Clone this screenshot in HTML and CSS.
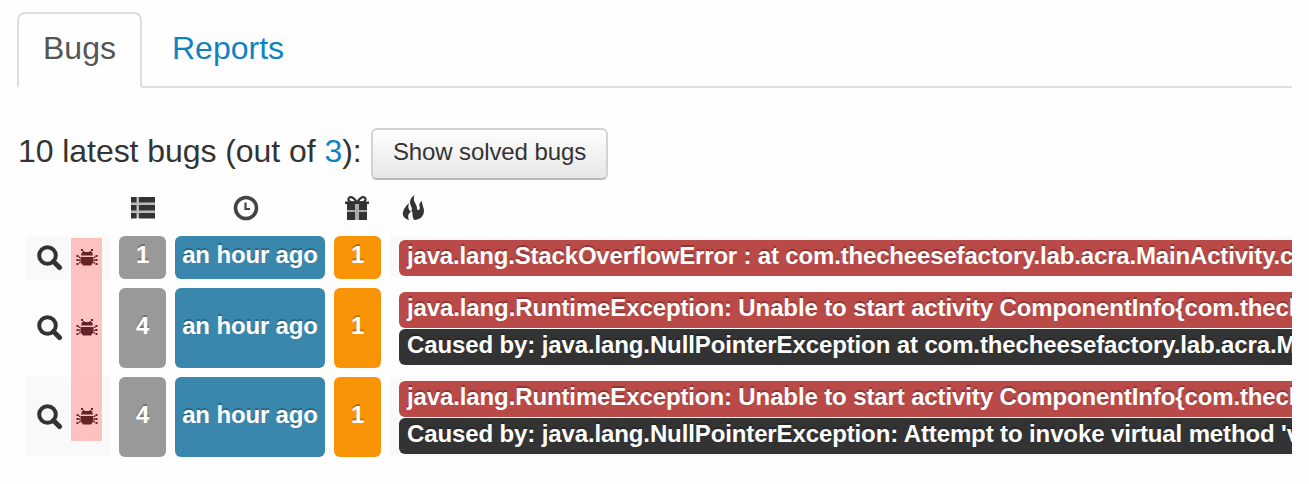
FILE: index.html
```
<!DOCTYPE html>
<html lang="en">
<head>
<meta charset="utf-8">
<title>Bugs</title>
<link rel="stylesheet" href="styles.css">
</head>
<body>
<svg class="defs" width="0" height="0" aria-hidden="true">
  <symbol id="search" viewBox="0 0 26 26"><circle cx="10.5" cy="10.5" r="8.300" fill="none" stroke="#333" stroke-width="4"/><path d="M16.500 16.500L22.500 22.500" stroke="#333" stroke-width="5" stroke-linecap="round"/></symbol>
  <symbol id="bug" viewBox="0 0 22 18"><path fill="#652328" d="M5 0h2v2h1.500v1h5V2H15V0h2v2h-2v1h1l1 3.500H5L6 3h1V2H5zM4.500 8h13v5L15 16.500H7L4.500 13zM.5 6h2v2h-2zM19.500 6h2v2h-2zM.5 10h2v2h-2zM2.700 7.500h1.400V9H2.700zM18 7.500h1.400V9H18zM19.500 10h2v2h-2zM2.700 10.500h1.400V12H2.700zM18 10.500h1.400V12H18zM.5 14h2v2h-2zM19.500 14h2v2h-2zM3 13h1.500v1.500H3zM17.500 13H19v1.500h-1.500z"/></symbol>
</svg>
<nav class="tabs">
  <a class="tab active">Bugs</a>
  <a class="tab">Reports</a>
</nav>
<main>
  <div class="heading"><span class="summary">10 latest bugs (out of <a>3</a>):</span><button class="button">Show solved bugs</button></div>
  <div class="grid head">
    <span></span>
    <svg width="26" height="24" viewBox="0 0 26 24"><path fill="#bbb" d="M1 1h24v21H1z"/><path fill="#333" d="M1 1h5.500v5.500H1zM9 1h16v5.500H9zM1 9h5.500v5.500H1zM9 9h16v5.500H9zM1 17h5.500v5.500H1zM9 17h16v5.500H9z"/></svg>
    <svg class="clock" width="26" height="26" viewBox="0 0 26 26"><circle cx="13" cy="13" r="10.500" fill="none" stroke="#444" stroke-width="3.600"/><path d="M12.500 7.500V14H17" fill="none" stroke="#444" stroke-width="2.200"/></svg>
    <svg class="gift" width="26" height="26" viewBox="0 0 26 26"><path fill="#aaa" d="M3 9h20v16H3z"/><path fill="#333" d="M3 9h8v6H3zM15 9h8v6h-8zM3 17h8v8H3zM15 17h8v8h-8zM1 6.500h24V9H1z"/><path d="M12.500 7C9 1 5 1 4.500 4s4 4 8 3M13.500 7c3.500-6 7.500-6 8-3s-4 4-8 3" fill="none" stroke="#333" stroke-width="2.200"/></svg>
    <svg class="fire" width="24" height="26" viewBox="0 0 24 26"><path fill="#333" d="M12.500 0C8 3 7 7 9 11c2 4 0 6-1 5-2-2-2-5-1-8-3 3-5 5-6 9-1 4 2 7 6 8-2-5 0-7 3-9 1 3 0 6 2 9 6 0 10-4 10-9 0-4-2-5-2-10-3 2-3 4-2 7-1 3-3 3-3 0 0-4-5-7-2.500-13z"/></svg>
  </div>
  <section class="rows">
    <div class="highlight"></div>
    <div class="grid row shaded">
      <div class="actions"><svg class="search"><use href="#search"/></svg><svg class="bug"><use href="#bug"/></svg></div>
      <div class="badge gray">1</div><div class="badge blue">an hour ago</div><div class="badge orange">1</div>
      <div class="trace"><p class="line red first">java.lang.StackOverflowError : at com.thecheesefactory.lab.acra.MainActivity.c</p></div>
    </div>
    <div class="grid row tall">
      <div class="actions"><svg class="search"><use href="#search"/></svg><svg class="bug"><use href="#bug"/></svg></div>
      <div class="badge gray">4</div><div class="badge blue">an hour ago</div><div class="badge orange">1</div>
      <div class="trace"><p class="line red">java.lang.RuntimeException: Unable to start activity ComponentInfo{com.thech</p><p class="line dark">Caused by: java.lang.NullPointerException at com.thecheesefactory.lab.acra.M</p></div>
    </div>
    <div class="grid row tall shaded">
      <div class="actions"><svg class="search"><use href="#search"/></svg><svg class="bug"><use href="#bug"/></svg></div>
      <div class="badge gray">4</div><div class="badge blue">an hour ago</div><div class="badge orange">1</div>
      <div class="trace"><p class="line red">java.lang.RuntimeException: Unable to start activity ComponentInfo{com.thech</p><p class="line dark">Caused by: java.lang.NullPointerException: Attempt to invoke virtual method 'v</p></div>
    </div>
  </section>
</main>
</body>
</html>
```
FILE: styles.css
```
* { box-sizing: border-box; }
body { margin: 0; padding: 12px 17px 0; background: #fefefe; color: #333; font-family: "Liberation Sans", Arial, sans-serif; overflow: hidden; }
.defs { display: block; height: 0; }
.tabs { display: flex; height: 76px; border-bottom: 2px solid #ddd; }
.tab { height: 76px; padding: 0 24px; border: 2px solid transparent; font-size: 32px; line-height: 68px; color: #0e83c2; }
.tab + .tab { padding-left: 28px; }
.active { width: 125px; color: #555; background: #fefefe; border-color: #ddd; border-bottom-color: #fefefe; border-radius: 8px 8px 0 0; }
.heading { display: flex; align-items: center; height: 52px; margin-top: 40px; }
.summary { width: 354px; padding-left: 1px; font-size: 32px; line-height: 46px; padding-bottom: 7px; letter-spacing: -0.06px; white-space: nowrap; }
.summary a { color: #0e83c2; }
.button { width: 237px; height: 52px; padding: 0 0 4px; border: 2px solid #d2d2d2; border-bottom-color: #b8b8b8; border-radius: 6px; background: linear-gradient(#fefefe, #e7e7e7); color: #333; font: 24px "Liberation Sans", Arial, sans-serif; letter-spacing: -0.1px; }
.grid { display: grid; grid-template-columns: 84px 47px 150px 47px 902px; column-gap: 9px; padding-left: 9px; }
.head { height: 56px; align-items: center; justify-items: center; }
.head .clock { margin-right: 8px; }
.head .gift { margin-right: 2px; }
.head .fire { justify-self: start; margin-left: 12px; }
.rows { position: relative; width: 1275px; overflow: hidden; }
.row { height: 43px; margin-bottom: 9px; }
.tall { height: 80px; }
.row:last-child { margin-bottom: 0; }
.actions { display: flex; align-items: center; padding-left: 11px; gap: 13px; }
.actions svg { position: relative; z-index: 2; }
.search { width: 26px; height: 26px; }
.bug { width: 22px; height: 18px; }
.shaded .actions, .shaded .trace { background: #f9f9f9; }
.badge { display: flex; align-items: center; justify-content: center; padding-bottom: 4px; border-radius: 6px; color: #fff; font-size: 24px; font-weight: bold; letter-spacing: -0.15px; text-shadow: 0 -2px 0 rgba(0,0,0,.25); white-space: nowrap; }
.shaded:not(.tall) .badge { padding-bottom: 5px; }
.gray { background: #999; }
.blue { background: #3a87ad; }
.orange { background: #f89406; }
.trace { padding: 4px 0 0 9px; height: 40px; }
.tall .trace { height: 80px; }
.line { height: 36px; margin: 0 0 1px; padding-left: 8px; border-radius: 6px 0 0 6px; color: #fff; font-size: 24px; font-weight: bold; line-height: 32px; letter-spacing: -0.12px; text-shadow: 0 -2px 0 rgba(0,0,0,.25); white-space: nowrap; }
.first { letter-spacing: -0.17px; }
.red { background: #b94a48; }
.dark { background: #333; }
.highlight { position: absolute; z-index: 1; left: 54px; top: 2px; width: 31px; height: 203px; background: rgba(255,120,120,.43); }
```
